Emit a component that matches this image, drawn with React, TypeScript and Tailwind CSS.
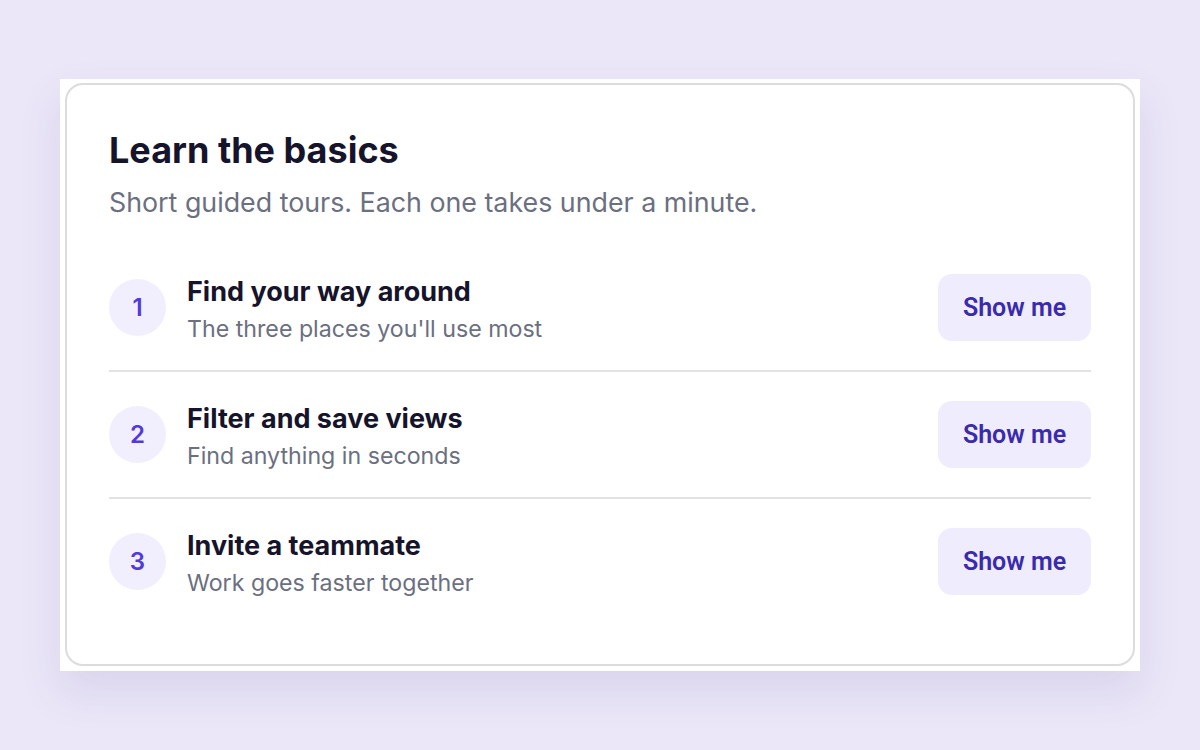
const tours = [
  { n: 1, title: 'Find your way around', desc: "The three places you'll use most" },
  { n: 2, title: 'Filter and save views', desc: 'Find anything in seconds' },
  { n: 3, title: 'Invite a teammate', desc: 'Work goes faster together' },
];

export default function App() {
  return (
    <div
      className="flex h-[750px] w-full items-center justify-center bg-[#ebe7f8]"
      style={{ fontFamily: 'Inter, "Noto Sans", sans-serif' }}
    >
      <div className="w-[1080px] bg-white pt-[4px] pb-[5px] px-[5px] shadow-[0_20px_40px_rgba(90,70,160,0.12)]">
        <div className="rounded-[18px] border-2 border-[#dcdcdf] px-[42px] pt-[43px] pb-[40px]">
          <h1 className="text-[36px] font-bold leading-[44px] text-[#16142b]">
            Learn the basics
          </h1>
          <p className="mt-[13px] text-[26.8px] leading-[34px] text-[#6b6f80]">
            Short guided tours. Each one takes under a minute.
          </p>
          <ul className="mt-[26px]">
            {tours.map((t, i) => (
              <li
                key={t.n}
                className={`flex items-center py-[29px] ${i < tours.length - 1 ? 'border-b-2 border-[#e2e2e5]' : ''}`}
              >
                <div className="flex h-[57px] w-[57px] shrink-0 items-center justify-center rounded-full bg-[#f1effe] text-[24px] font-semibold text-[#5138e0]">
                  {t.n}
                </div>
                <div className="ml-[21px] h-[67px] flex-1">
                  <div className="text-[27px] font-bold leading-[36px] text-[#16142b]">{t.title}</div>
                  <div className="mt-[5px] text-[23.2px] leading-[28px] text-[#6b6f80]">{t.desc}</div>
                </div>
                <button
                  className="h-[67px] w-[153px] rounded-[14px] bg-[#efecfd] text-[25px] font-semibold text-[#3a2aad]"
                  style={{ fontFamily: 'Roboto, sans-serif' }}
                >
                  Show me
                </button>
              </li>
            ))}
          </ul>
        </div>
      </div>
    </div>
  );
}
